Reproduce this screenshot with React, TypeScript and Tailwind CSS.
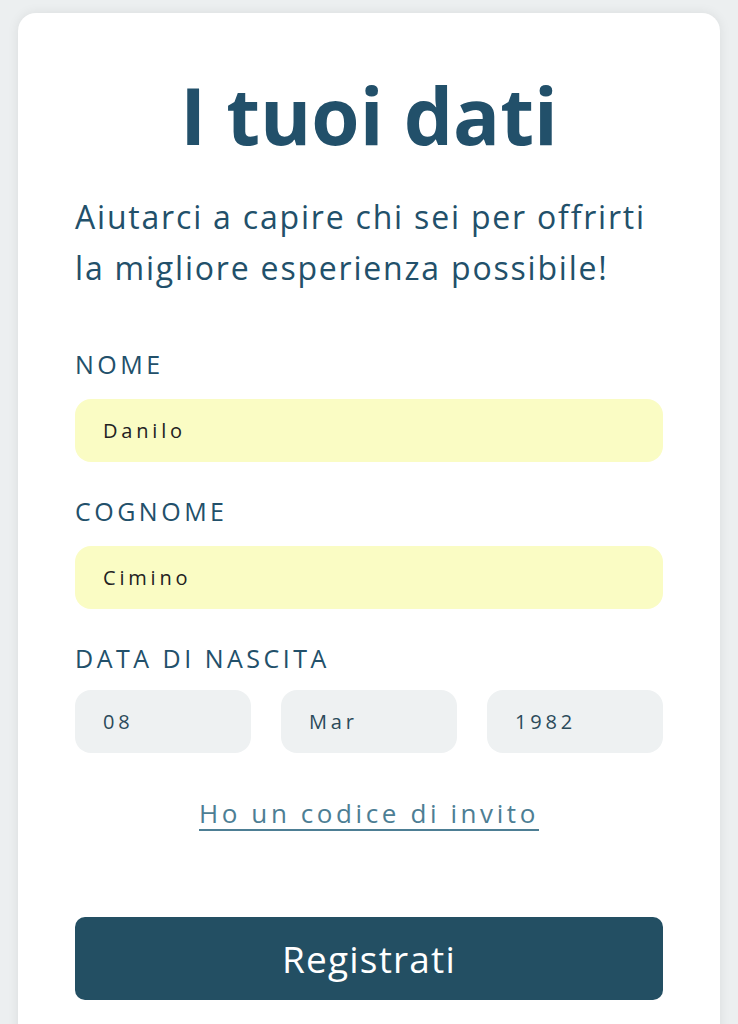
import React from "react";

const font = { fontFamily: '"Open Sans", "Liberation Sans", sans-serif' };

function Field({ label, value }: { label: string; value: string }) {
  return (
    <div className="flex flex-col">
      <label className="text-[25px] leading-[30px] font-medium tracking-[3.5px] text-[#22506a] uppercase">
        {label}
      </label>
      <div className="mt-[20px] h-[63px] rounded-[16px] bg-[#fafcc4] flex items-center px-[28px] text-[20px] tracking-[3.8px] text-[#222]">
        {value}
      </div>
    </div>
  );
}

export default function App() {
  const dateParts = ["08", "Mar", "1982"];
  return (
    <div className="min-h-screen bg-[#eceff0] pt-[13px] px-[18px] overflow-hidden" style={font}>
      <div className="bg-white rounded-t-[18px] shadow-[0_0_12px_rgba(0,0,0,0.08)] px-[57px] pt-[54px] pb-[40px] min-h-[1100px]">
        <h1 className="text-center text-[78px] leading-[96px] font-bold text-[#22506a]">I tuoi dati</h1>

        <p className="mt-[28px] text-[32px] leading-[51px] tracking-[1.8px] text-[#22506a]">
          Aiutarci a capire chi sei per offrirti
          <br />
          la migliore esperienza possibile!
        </p>

        <div className="mt-[56px] flex flex-col gap-[34px]">
          <Field label="Nome" value="Danilo" />
          <Field label="Cognome" value="Cimino" />

          <div className="flex flex-col">
            <label className="text-[25px] leading-[30px] font-medium tracking-[3.5px] text-[#22506a] uppercase">
              Data di nascita
            </label>
            <div className="mt-[17px] grid grid-cols-3 gap-[30px]">
              {dateParts.map((p, i) => (
                <div
                  key={i}
                  className="h-[63px] rounded-[16px] bg-[#eef1f2] flex items-center px-[28px] text-[20px] tracking-[3.8px] text-[#2b4a5a]"
                >
                  {p}
                </div>
              ))}
            </div>
          </div>
        </div>

        <div className="mt-[41px] text-center">
          <a className="text-[26px] tracking-[3.6px] text-[#4d7e94] underline underline-offset-[6px] decoration-[1.5px]">
            Ho un codice di invito
          </a>
        </div>

        <button className="mt-[84px] w-full h-[83px] rounded-[10px] bg-[#234f63] text-white text-[37px] tracking-[1.2px]">
          Registrati
        </button>
      </div>
    </div>
  );
}
